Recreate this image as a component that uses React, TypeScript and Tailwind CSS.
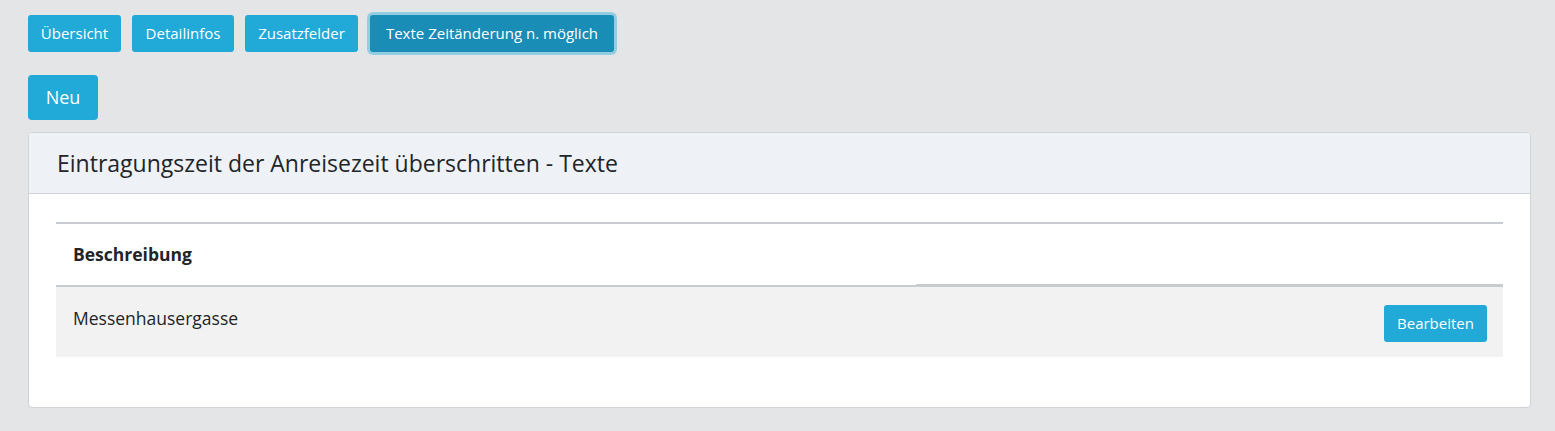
import React from "react";

const tabs = [
  { label: "Übersicht", width: "w-[93px]" },
  { label: "Detailinfos", width: "w-[102px]" },
  { label: "Zusatzfelder", width: "w-[113px]" },
];

export default function App() {
  return (
    <div
      className="min-h-[431px] bg-[#e4e5e7] pt-[15px] pr-6 pb-6 pl-7 text-[#212529]"
      style={{ fontFamily: "'Open Sans', 'Noto Sans', sans-serif" }}
    >
      <div className="flex items-center gap-[11px]">
        {tabs.map((t) => (
          <button
            key={t.label}
            className={`${t.width} h-[37px] rounded-[3px] bg-[#21a9d8] text-[15px] text-white`}
          >
            {t.label}
          </button>
        ))}
        <button className="ml-[1px] h-[37px] w-[244px] rounded-[3px] bg-[#1a8db6] text-[15px] text-white ring-[3px] ring-[#92cde1]">
          Texte Zeitänderung n. möglich
        </button>
      </div>

      <button className="mt-[23px] h-[45px] w-[70px] rounded-[4px] bg-[#21a9d8] text-[18px] text-white">
        Neu
      </button>

      <div className="mt-3 overflow-hidden rounded-[4px] border border-[#cfd2d6] bg-white">
        <div className="flex h-[61px] items-center border-b border-[#cfd2d6] bg-[#eef2f6] px-7">
          <h2 className="text-[23px] text-[#212529]">
            Eintragungszeit der Anreisezeit überschritten - Texte
          </h2>
        </div>
        <div className="px-[27px] pt-7 pb-[50px]">
          <div className="border-t-2 border-[#c8cbd0]">
            <div className="flex h-[63px]">
              <div className="flex w-[860px] items-center border-b-2 border-[#c8cbd0] px-[17px] text-[17.5px] font-bold">
                Beschreibung
              </div>
              <div className="flex-1 border-b-[3px] border-[#c8cbd0]" />
            </div>
            <div className="flex h-[70px] items-center justify-between bg-[#f2f2f2] pr-4 pl-[17px]">
              <span className="-mt-[8px] text-[17.5px]">Messenhausergasse</span>
              <button className="mt-[2px] h-[37px] w-[103px] rounded-[3px] bg-[#21a9d8] text-[15px] text-white">
                Bearbeiten
              </button>
            </div>
          </div>
        </div>
      </div>
    </div>
  );
}
